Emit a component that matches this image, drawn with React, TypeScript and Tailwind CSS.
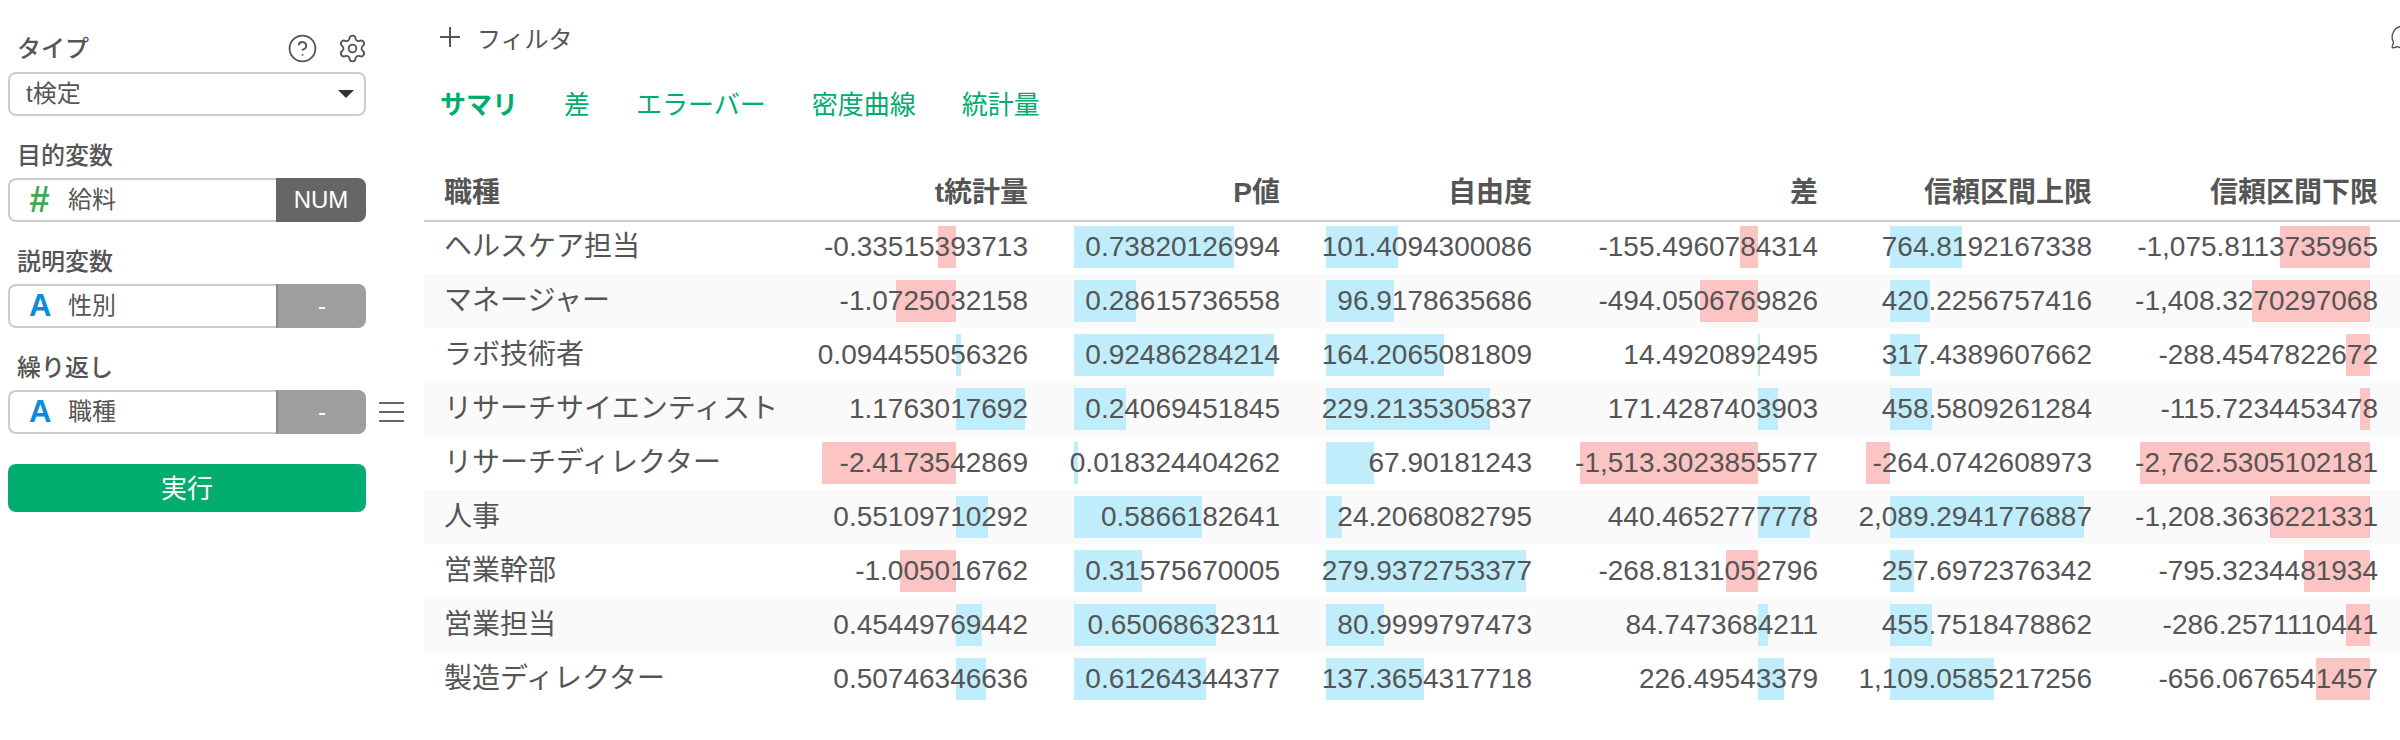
import { CircleHelp, MessageCircle, Settings } from "lucide-react";

const columns = ["t統計量", "P値", "自由度", "差", "信頼区間上限", "信頼区間下限"];

// where the zero line of each column's bar sits, from the cell's left edge
const axes = [156, 24, 24, 204, 50, 256];

// values and bar widths in px, negative bars grow left of the axis
const rows: { name: string; cells: [string, number][] }[] = [
  {
    name: "ヘルスケア担当",
    cells: [["-0.33515393713", -18], ["0.73820126994", 160], ["101.4094300086", 72], ["-155.4960784314", -18], ["764.8192167338", 72], ["-1,075.8113735965", -90]],
  },
  {
    name: "マネージャー",
    cells: [["-1.0725032158", -60], ["0.28615736558", 62], ["96.9178635686", 68], ["-494.0506769826", -58], ["420.2256757416", 40], ["-1,408.3270297068", -118]],
  },
  {
    name: "ラボ技術者",
    cells: [["0.094455056326", 5], ["0.92486284214", 200], ["164.2065081809", 118], ["14.4920892495", 2], ["317.4389607662", 30], ["-288.4547822672", -24]],
  },
  {
    name: "リサーチサイエンティスト",
    cells: [["1.1763017692", 69], ["0.24069451845", 52], ["229.2135305837", 164], ["171.4287403903", 20], ["458.5809261284", 42], ["-115.7234453478", -10]],
  },
  {
    name: "リサーチディレクター",
    cells: [["-2.4173542869", -134], ["0.018324404262", 4], ["67.90181243", 48], ["-1,513.3023855577", -178], ["-264.0742608973", -24], ["-2,762.5305102181", -230]],
  },
  {
    name: "人事",
    cells: [["0.55109710292", 32], ["0.5866182641", 128], ["24.2068082795", 16], ["440.4652777778", 52], ["2,089.2941776887", 194], ["-1,208.3636221331", -100]],
  },
  {
    name: "営業幹部",
    cells: [["-1.005016762", -56], ["0.31575670005", 68], ["279.9372753377", 200], ["-268.8131052796", -32], ["257.6972376342", 24], ["-795.3234481934", -66]],
  },
  {
    name: "営業担当",
    cells: [["0.45449769442", 26], ["0.65068632311", 142], ["80.9999797473", 58], ["84.7473684211", 10], ["455.7518478862", 42], ["-286.2571110441", -24]],
  },
  {
    name: "製造ディレクター",
    cells: [["0.50746346636", 30], ["0.61264344377", 132], ["137.3654317718", 98], ["226.49543379", 26], ["1,109.0585217256", 104], ["-656.0676541457", -54]],
  },
];

function barStyle(axis: number, width: number) {
  const color = width < 0 ? "#fdc4c4" : "#bfedfb";
  const left = width < 0 ? axis + width : axis;
  return {
    backgroundImage: `linear-gradient(${color}, ${color})`,
    backgroundSize: `${Math.abs(width)}px 42px`,
    backgroundPosition: `${left}px 6px`,
    backgroundRepeat: "no-repeat",
  };
}

function VarField({ icon, name, tag }: { icon: "num" | "text"; name: string; tag: string }) {
  return (
    <div className="flex h-[44px] w-[358px]">
      <div className="flex w-[268px] items-center rounded-l-lg border-2 border-r-0 border-[#cccccc] bg-white">
        {icon === "num" ? (
          <span className="ml-[19px] w-[39px] text-[36px] font-bold italic text-[#3fa94f]">#</span>
        ) : (
          <span className="ml-[19px] w-[39px] text-[31px] font-bold text-[#0a8cd8]">A</span>
        )}
        <span className="text-[24px] text-[#555555]">{name}</span>
      </div>
      {tag === "NUM" ? (
        <div className="flex flex-1 items-center justify-center rounded-r-lg bg-[#666666] text-[24px] text-white">NUM</div>
      ) : (
        <div className="flex flex-1 items-center justify-center rounded-r-lg border-l-2 border-[#888888] bg-[#9e9e9e] text-[24px] text-white">-</div>
      )}
    </div>
  );
}

function Label({ text }: { text: string }) {
  return <div className="mt-[23px] mb-[7px] flex h-8 items-center pl-[9px] pt-[1px] text-[24px] font-medium">{text}</div>;
}

export default function App() {
  return (
    <div className="flex h-[740px] w-[2400px] overflow-hidden bg-white font-['Liberation_Sans','Noto_Sans_CJK_JP',sans-serif] text-[#555555]">
      <aside className="w-[424px] shrink-0 pl-2 pt-8">
        <div className="mb-2 flex h-8 w-[358px] items-center justify-between pl-[9px] text-[24px] font-medium">
          <span className="pt-[1px]">タイプ</span>
          <div className="-mr-[2px] flex items-center gap-[19px]">
            <CircleHelp size={31} strokeWidth={1.4} />
            <Settings size={31} strokeWidth={1.4} />
          </div>
        </div>
        <div className="flex h-[44px] w-[358px] items-center justify-between rounded-lg border-2 border-[#cccccc] pl-4 pr-[10px] text-[24px]">
          <span>t検定</span>
          <span className="h-0 w-0 border-x-8 border-t-8 border-x-transparent border-t-[#333333]" />
        </div>

        <Label text="目的変数" />
        <VarField icon="num" name="給料" tag="NUM" />

        <Label text="説明変数" />
        <VarField icon="text" name="性別" tag="-" />

        <Label text="繰り返し" />
        <div className="flex items-center gap-[13px]">
          <VarField icon="text" name="職種" tag="-" />
          <svg width="25" height="22" viewBox="0 0 25 22" stroke="#666666" strokeWidth="2">
            <path d="M0 2H25M0 11H25M0 20H25" />
          </svg>
        </div>

        <button className="mt-[30px] h-12 w-[358px] rounded-lg bg-[#00ad6e] pt-[3px] text-[26px] text-white">実行</button>
      </aside>

      <main className="min-w-0 flex-1 pt-[17px]">
        <div className="flex h-10 items-center justify-between pl-4">
          <div className="flex items-center gap-[17px] text-[24px]">
            <svg width="20" height="20" viewBox="0 0 20 20" stroke="#555555" strokeWidth="2">
              <path d="M10 0V20M0 10H20" />
            </svg>
            <span className="pt-[5px]">フィルタ</span>
          </div>
          <MessageCircle size={26} strokeWidth={1.3} className="-mr-[16px]" />
        </div>

        <div className="mt-[28px] flex h-10 items-center gap-[46px] pl-4 text-[26px] text-[#00ad6e]">
          <span className="font-bold">サマリ</span>
          <span>差</span>
          <span>エラーバー</span>
          <span>密度曲線</span>
          <span>統計量</span>
        </div>

        <div className="mt-[40px]">
          <div className="-mb-[2px] grid h-[57px] grid-cols-[376px_250px_252px_252px_286px_274px_286px] items-center border-b-2 border-[#cccccc] pt-[1px] text-[28px] font-bold">
            <div className="pl-5">職種</div>
            {columns.map((col) => (
              <div key={col} className="pr-[22px] text-right">
                {col}
              </div>
            ))}
          </div>
          {rows.map((row, i) => (
            <div
              key={row.name}
              className={`grid h-[54px] grid-cols-[376px_250px_252px_252px_286px_274px_286px] text-[28px] ${i % 2 === 1 ? "bg-[#fafafa]" : ""}`}
            >
              <div className="flex items-center whitespace-nowrap pl-5">{row.name}</div>
              {row.cells.map(([value, bar], c) => (
                <div
                  key={c}
                  className="flex items-center justify-end whitespace-nowrap pr-[22px]"
                  style={barStyle(axes[c], bar)}
                >
                  {value}
                </div>
              ))}
            </div>
          ))}
        </div>
      </main>
    </div>
  );
}
